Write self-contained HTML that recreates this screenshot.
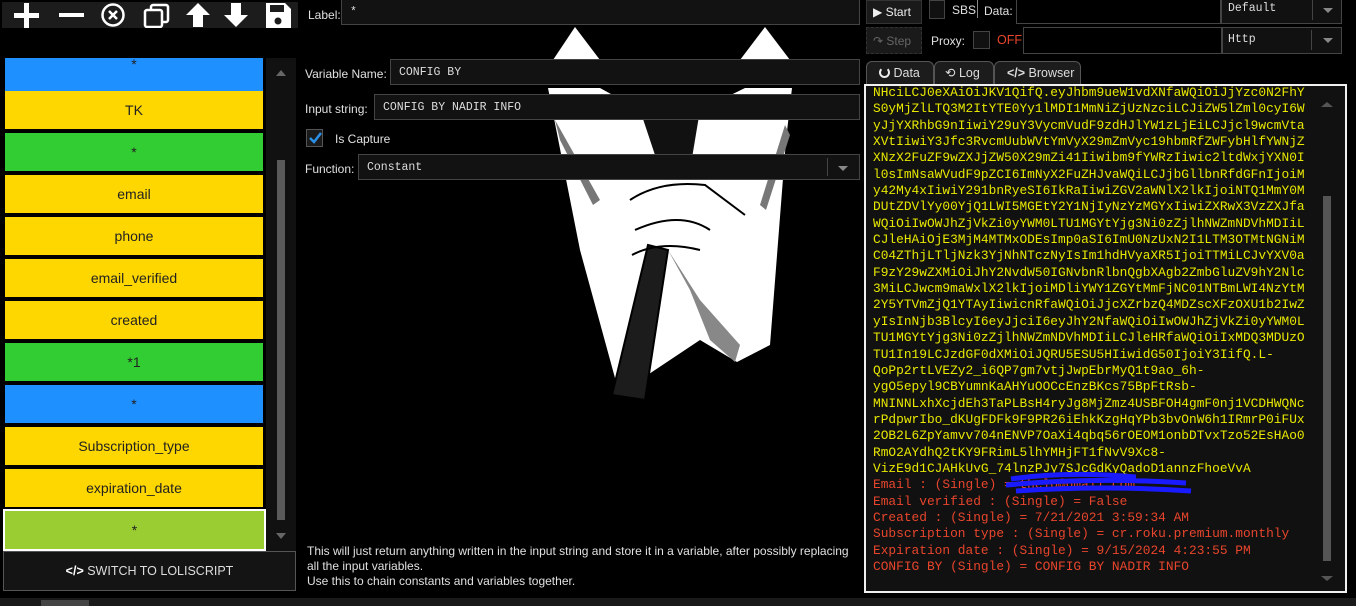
<!DOCTYPE html>
<html><head><meta charset="utf-8">
<style>
*{margin:0;padding:0;box-sizing:border-box}
body{width:1356px;height:606px;background:#000;overflow:hidden;position:relative;font-family:"Liberation Sans",sans-serif;color:#ddd}
.abs{position:absolute}
.tb{left:2px;top:2px;width:296px;height:26px;background:#1c1c1c}
.item{position:absolute;left:5px;width:258px;height:38px;color:#222;font-size:14px;text-align:center;line-height:38px}
.y{background:#ffd700}.g{background:#32cd32}.b{background:#1e90ff}
.lbl{font-size:12px;color:#e0e0e0;position:absolute}
.inp{position:absolute;background:#121212;border:1px solid #444;font-family:"Liberation Mono",monospace;font-size:11.5px;color:#ddd;padding-left:8px}
.mono{font-family:"Liberation Mono",monospace}
#out{position:absolute;left:864px;top:84px;width:483px;height:509px;border:2px solid #f0f0f0;background:#111;overflow:hidden}
#out pre{position:absolute;left:7px;top:-1px;font-family:"Liberation Mono",monospace;font-size:12.85px;line-height:16.35px;color:#e8e800}
#out .r{color:#e8452c}
.tab{position:absolute;top:61px;height:23px;background:#1c1c1c;border:1px solid #555;border-bottom:none;border-radius:6px 6px 0 0;font-size:12.5px;color:#ddd;line-height:22px}
</style></head><body>

<div class="abs tb"></div>
<svg class="abs" style="left:2px;top:2px" width="296" height="26" viewBox="0 0 296 26" fill="#fff">
<rect x="12" y="11" width="25" height="5"/><rect x="22" y="1" width="5" height="25"/>
<rect x="57" y="11" width="25" height="4"/>
<circle cx="111" cy="13" r="10.5" fill="none" stroke="#fff" stroke-width="2.5"/>
<path d="M107 9l8 8M115 9l-8 8" stroke="#fff" stroke-width="2.5"/>
<rect x="149" y="3" width="17" height="17" fill="none" stroke="#fff" stroke-width="2.5" rx="2"/>
<rect x="143" y="8" width="17" height="17" fill="#1c1c1c" stroke="#fff" stroke-width="2.5" rx="2"/>
<path d="M196 1l12 12h-7v12h-10v-12h-7z"/>
<path d="M234 25l12-12h-7v-12h-10v12h-7z"/>
<path d="M264 1h19l6 6v19h-25z"/><rect x="268" y="3" width="14" height="7" fill="#1c1c1c"/><circle cx="276" cy="19" r="3.5" fill="#1c1c1c"/>
</svg>

<div class="abs" style="left:3px;top:58px;width:263px;height:493px;overflow:hidden">
<div class="item b" style="top:-4px;left:2px;line-height:20px">*</div>
<div class="item y" style="top:33px;left:2px">TK</div>
<div class="item g" style="top:75px;left:2px">*</div>
<div class="item y" style="top:117px;left:2px">email</div>
<div class="item y" style="top:159px;left:2px">phone</div>
<div class="item y" style="top:201px;left:2px">email_verified</div>
<div class="item y" style="top:243px;left:2px">created</div>
<div class="item g" style="top:285px;left:2px">*1</div>
<div class="item b" style="top:327px;left:2px">*</div>
<div class="item y" style="top:369px;left:2px">Subscription_type</div>
<div class="item y" style="top:411px;left:2px">expiration_date</div>
<div class="item" style="top:451px;left:0;width:263px;height:42px;border:2px solid #fff;background:#9acd32;line-height:38px">*</div>
</div>
<div class="abs" style="left:266px;top:58px;width:30px;height:493px;background:#111"></div>
<div class="abs" style="left:277px;top:160px;width:8px;height:360px;background:#5a5a5a"></div>
<div class="abs" style="left:276px;top:70px;width:0;height:0;border:5px solid transparent;border-bottom:6px solid #666;border-top:none"></div>
<div class="abs" style="left:276px;top:533px;width:0;height:0;border:5px solid transparent;border-top:6px solid #666;border-bottom:none"></div>
<div class="abs" style="left:3px;top:551px;width:293px;height:40px;background:#141414;border:1px solid #555;color:#ddd;font-size:12.5px;text-align:center;line-height:38px"><b style="color:#fff">&lt;/&gt;</b> SWITCH TO LOLISCRIPT</div>

<svg class="abs" style="left:500px;top:0" width="320" height="420" viewBox="500 0 320 420">
<polygon points="553,60 575,27 600,60" fill="#fff"/>
<polygon points="740,60 765,27 790,60" fill="#fff"/>
<polygon points="548,88 600,88 640,110 700,110 745,88 792,88 786,140 770,345 737,362 700,340 640,380 615,378 580,250" fill="#fff"/>
<polygon points="555,120 600,200 593,205 560,140" fill="#777"/>
<polygon points="785,125 760,205 766,210 790,135" fill="#777"/>
<polygon points="640,110 700,110 690,170 660,170" fill="#111"/>
<polygon points="648,245 668,250 645,400 612,395" fill="#1c1c1c" stroke="#000" stroke-width="2"/>
<polygon points="668,250 690,290 710,340 735,362 740,345 700,300" fill="#888"/>
<path d="M630,200 Q660,180 705,185 L745,215 M635,230 Q680,210 710,230 M632,255 Q660,240 700,250" stroke="#000" stroke-width="2" fill="none"/>
</svg>

<div class="lbl" style="left:308px;top:8px">Label:</div>
<div class="inp" style="left:341px;top:-1px;width:519px;height:26px;line-height:26px">*</div>
<div class="lbl" style="left:305px;top:67px">Variable Name:</div>
<div class="inp" style="left:390px;top:59px;width:470px;height:26px;line-height:26px">CONFIG BY</div>
<div class="lbl" style="left:305px;top:102px">Input string:</div>
<div class="inp" style="left:374px;top:94px;width:486px;height:26px;line-height:26px">CONFIG BY NADIR INFO</div>
<div class="abs" style="left:306px;top:129px;width:17px;height:18px;border:1px solid #555;background:#1a1a1a"></div>
<svg class="abs" style="left:308px;top:132px" width="14" height="12"><path d="M2 6l4 4 7-9" stroke="#2b8fe6" stroke-width="2.5" fill="none"/></svg>
<div class="lbl" style="left:335px;top:132px">Is Capture</div>
<div class="lbl" style="left:305px;top:162px">Function:</div>
<div class="inp" style="left:358px;top:154px;width:502px;height:26px;line-height:26px">Constant</div>
<div class="abs" style="left:827px;top:158px;width:1px;height:18px;background:#444"></div>
<div class="abs" style="left:838px;top:166px;border:5px solid transparent;border-top:5px solid #888;border-bottom:none"></div>
<div class="lbl" style="left:307px;top:544px;line-height:15px;width:548px">This will just return anything written in the input string and store it in a variable, after possibly replacing all the input variables.<br>Use this to chain constants and variables together.</div>

<div class="abs" style="left:866px;top:0;width:56px;height:24px;background:#1a1a1a;border:1px solid #333;font-size:12px;line-height:22px;padding-left:6px;color:#eee">&#9654; Start</div>
<div class="abs" style="left:866px;top:27px;width:56px;height:27px;background:#1a1a1a;border:1px dashed #333;font-size:12px;line-height:26px;padding-left:6px;color:#666">&#8631; Step</div>
<div class="abs" style="left:929px;top:0;width:16px;height:19px;border:1px solid #444;background:#111"></div>
<div class="lbl" style="left:952px;top:3px">SBS</div>
<div class="abs" style="left:977px;top:0;width:1px;height:18px;background:#888"></div>
<div class="lbl" style="left:984px;top:4px">Data:</div>
<div class="abs" style="left:1016px;top:-1px;width:205px;height:25px;border:1px solid #444;background:#000"></div>
<div class="abs mono" style="left:1221px;top:-1px;width:121px;height:25px;border:1px solid #444;background:#111;font-size:11.5px;padding:2px 0 0 6px;color:#ddd">Default</div>
<div class="abs" style="left:1312px;top:0;width:1px;height:20px;background:#444"></div>
<div class="abs" style="left:1323px;top:8px;border:5px solid transparent;border-top:5px solid #888;border-bottom:none"></div>
<div class="lbl" style="left:931px;top:34px">Proxy:</div>
<div class="abs" style="left:973px;top:31px;width:17px;height:18px;border:1px solid #444;background:#111"></div>
<div class="abs" style="left:997px;top:33px;font-size:12.5px;color:#e8452c">OFF</div>
<div class="abs" style="left:1023px;top:27px;width:199px;height:27px;border:1px solid #444;background:#000"></div>
<div class="abs mono" style="left:1222px;top:27px;width:120px;height:27px;border:1px solid #444;background:#111;font-size:11.5px;padding:5px 0 0 5px;color:#ddd">Http</div>
<div class="abs" style="left:1311px;top:30px;width:1px;height:20px;background:#444"></div>
<div class="abs" style="left:1323px;top:38px;border:5px solid transparent;border-top:5px solid #888;border-bottom:none"></div>

<div class="tab" style="left:866px;width:68px;padding-left:12px"><span style="display:inline-block;width:11px;height:11px;border:2px solid #eee;border-radius:50%;border-top-color:transparent;vertical-align:-1px"></span> Data</div>
<div class="tab" style="left:934px;width:60px;padding-left:10px">&#10226; Log</div>
<div class="tab" style="left:994px;width:87px;padding-left:12px"><b>&lt;/&gt;</b> Browser</div>

<div id="out"><pre>NHciLCJ0eXAiOiJKV1QifQ.eyJhbm9ueW1vdXNfaWQiOiJjYzc0N2FhY
S0yMjZlLTQ3M2ItYTE0Yy1lMDI1MmNiZjUzNzciLCJiZW5lZml0cyI6W
yJjYXRhbG9nIiwiY29uY3VycmVudF9zdHJlYW1zLjEiLCJjcl9wcmVta
XVtIiwiY3Jfc3RvcmUubWVtYmVyX29mZmVyc19hbmRfZWFybHlfYWNjZ
XNzX2FuZF9wZXJjZW50X29mZi41Iiwibm9fYWRzIiwic2ltdWxjYXN0I
l0sImNsaWVudF9pZCI6ImNyX2FuZHJvaWQiLCJjbGllbnRfdGFnIjoiM
y42My4xIiwiY291bnRyeSI6IkRaIiwiZGV2aWNlX2lkIjoiNTQ1MmY0M
DUtZDVlYy00YjQ1LWI5MGEtY2Y1NjIyNzYzMGYxIiwiZXRwX3VzZXJfa
WQiOiIwOWJhZjVkZi0yYWM0LTU1MGYtYjg3Ni0zZjlhNWZmNDVhMDIiL
CJleHAiOjE3MjM4MTMxODEsImp0aSI6ImU0NzUxN2I1LTM3OTMtNGNiM
C04ZThjLTljNzk3YjNhNTczNyIsIm1hdHVyaXR5IjoiTTMiLCJvYXV0a
F9zY29wZXMiOiJhY2NvdW50IGNvbnRlbnQgbXAgb2ZmbGluZV9hY2Nlc
3MiLCJwcm9maWxlX2lkIjoiMDliYWY1ZGYtMmFjNC01NTBmLWI4NzYtM
2Y5YTVmZjQ1YTAyIiwicnRfaWQiOiJjcXZrbzQ4MDZscXFzOXU1b2IwZ
yIsInNjb3BlcyI6eyJjciI6eyJhY2NfaWQiOiIwOWJhZjVkZi0yYWM0L
TU1MGYtYjg3Ni0zZjlhNWZmNDVhMDIiLCJleHRfaWQiOiIxMDQ3MDUzO
TU1In19LCJzdGF0dXMiOiJQRU5ESU5HIiwidG50IjoiY3IifQ.L-
QoPp2rtLVEZy2_i6QP7gm7vtjJwpEbrMyQ1t9ao_6h-
ygO5epyl9CBYumnKaAHYuOOCcEnzBKcs75BpFtRsb-
MNINNLxhXcjdEh3TaPLBsH4ryJg8MjZmz4USBFOH4gmF0nj1VCDHWQNc
rPdpwrIbo_dKUgFDFk9F9PR26iEhkKzgHqYPb3bvOnW6h1IRmrP0iFUx
2OB2L6ZpYamvv704nENVP7OaXi4qbq56rOEOM1onbDTvxTzo52EsHAo0
RmO2AYdhQ2tKY9FRimL5lhYMHjFT1fNvV9Xc8-
VizE9d1CJAHkUvG_74lnzPJy7SJcGdKyQadoD1annzFhoeVvA
<span class="r">Email : (Single) = thelo@gmail.com
Email verified : (Single) = False
Created : (Single) = 7/21/2021 3:59:34 AM
Subscription type : (Single) = cr.roku.premium.monthly
Expiration date : (Single) = 9/15/2024 4:23:55 PM
CONFIG BY (Single) = CONFIG BY NADIR INFO</span></pre>
<svg class="abs" style="left:140px;top:385px" width="200" height="30"><path d="M5 8 Q60 0 130 6 M0 14 Q90 6 180 12 M10 20 Q100 14 185 20" stroke="#1a1aff" stroke-width="5" fill="none"/></svg>
<div class="abs" style="left:457px;top:110px;width:8px;height:365px;background:#555"></div>
<div class="abs" style="left:455px;top:16px;border:6px solid transparent;border-bottom:5px solid #555;border-top:none"></div>
<div class="abs" style="left:455px;top:490px;border:6px solid transparent;border-top:5px solid #555;border-bottom:none"></div>
</div>

<div class="abs" style="left:0;top:598px;width:1356px;height:8px;background:#1a1a1a"></div>
<div class="abs" style="left:41px;top:600px;width:48px;height:6px;background:#444"></div>
</body></html>
